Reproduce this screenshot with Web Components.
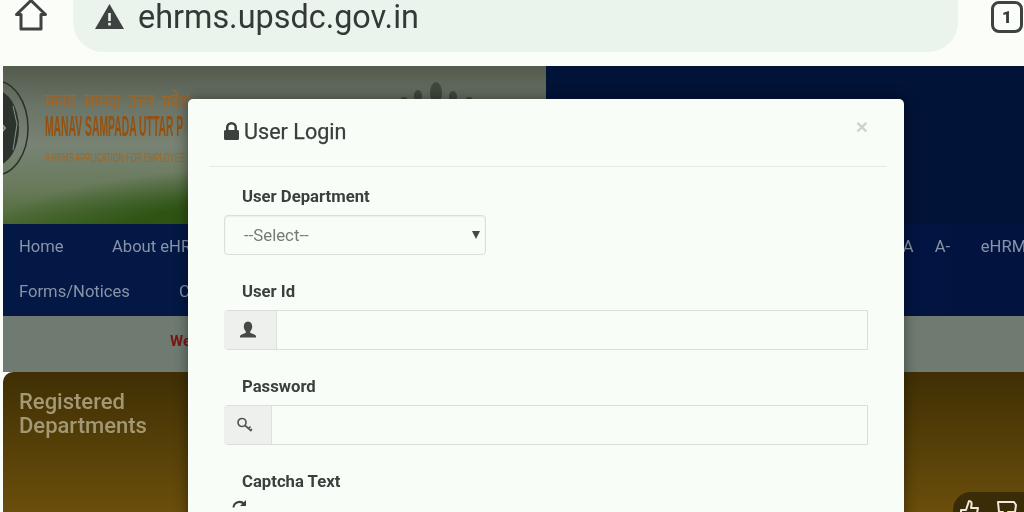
<!DOCTYPE html>
<html lang="en">
<head>
<meta charset="utf-8">
<title>User Login</title>
<style>
  html, body { margin: 0; padding: 0; height: 512px; overflow: hidden; background: #fbfdf9; font-family: Roboto, "Liberation Sans", sans-serif; }
</style>
</head>
<body>
<app-screen>
  <browser-bar url="ehrms.upsdc.gov.in" tabs="1"></browser-bar>
  <site-page></site-page>
  <login-modal heading="User Login">
    <form-field label="User Department"><select-box text="--Select--"></select-box></form-field>
    <form-field label="User Id"><input-group icon="user" addon="53"></input-group></form-field>
    <form-field label="Password"><input-group icon="key" addon="48"></input-group></form-field>
    <form-field label="Captcha Text"><refresh-icon></refresh-icon></form-field>
  </login-modal>
  <rate-pill></rate-pill>
</app-screen>

<script>
class AppScreen extends HTMLElement {
  constructor() {
    super();
    this.attachShadow({ mode: 'open' }).innerHTML = `
    <style>
      :host { display: block; position: relative; width: 1024px; height: 512px; overflow: hidden; filter: blur(.4px); }
    </style>
    <slot></slot>`;
  }
}

class BrowserBar extends HTMLElement {
  connectedCallback() {
    this.attachShadow({ mode: 'open' }).innerHTML = `
    <style>
      :host { display: flex; align-items: flex-start; height: 66px; background: #fbfdf9; box-sizing: border-box; color: #333a38; }
      .home { width: 73px; flex: none; padding: 0 0 0 14px; box-sizing: border-box; }
      .home svg { display: block; margin-top: -2px; }
      .pill { width: 885px; height: 52px; flex: none; background: #eaf3ec; border-radius: 0 0 30px 30px; display: flex; align-items: center; box-sizing: border-box; padding: 0 0 18px 22px; }
      .url { font-size: 32.400px; margin-left: 14px; line-height: 34px; color: #323a38; }
      .tabs { margin: 1px 0 0 33px; width: 32px; height: 32px; border: 3px solid #3c4341; border-radius: 8px; box-sizing: border-box; display: flex; align-items: center; justify-content: center; font: 900 17px Roboto, sans-serif; }
      .pill svg { margin-top: -1px; }
    </style>
    <div class="home">
      <svg width="34" height="34" viewBox="0 0 34 34" fill="none" stroke="#3c4341" stroke-width="3" stroke-linejoin="round"><path d="M2.500 16.500 17 2.500 31.500 16.500H27V31H7V16.500Z"/></svg>
    </div>
    <div class="pill">
      <svg width="29" height="25" viewBox="0 0 29 25"><path fill="#3c4341" d="M14.500 0 29 25H0Z"/><path fill="#eaf3ec" d="M13.200 9h2.600v8h-2.600zM13.200 18.800h2.600v2.600h-2.600z"/></svg>
      <span class="url">${this.getAttribute('url')}</span>
    </div>
    <div class="tabs">${this.getAttribute('tabs')}</div>`;
  }
}

class SitePage extends HTMLElement {
  connectedCallback() {
    this.attachShadow({ mode: 'open' }).innerHTML = `
    <style>
      :host { display: block; margin-left: 3px; height: 446px; overflow: hidden; }
      .top { display: flex; height: 158px; box-shadow: inset 0 1px 0 #444; }
      .brand { width: 543px; flex: none; position: relative; overflow: hidden;
        background:
          radial-gradient(ellipse 320px 70px at 300px 170px, #27500c 0%, rgba(39,80,12,.85) 55%, rgba(39,80,12,0) 100%),
          linear-gradient(#535b4c 0%, #6a7467 25%, #788374 50%, #687a5a 78%, #4d6a34 100%); }
      .navy { flex: 1; background: #021338; }
      .emblem { position: absolute; left: -40px; top: 14px; }
      .hands { position: absolute; left: 395px; top: 12px; }
      .brandtext { position: absolute; left: 42px; top: 23px; color: #a5641f; white-space: nowrap; }
      .brandtext div { transform-origin: 0 0; }
      .hi { font: 400 20px "Noto Sans", "Noto Sans CJK SC", "DejaVu Sans", sans-serif; word-spacing: 5px; transform: scaleX(.78); line-height: 23px; height: 23px; }
      .en { font: 700 30px "Liberation Sans", sans-serif; transform: scaleX(.345); line-height: 28px; height: 28px; color: #94500f; }
      .tag { font: 400 12px "Liberation Sans", sans-serif; transform: scaleX(.62); line-height: 14px; margin-top: 11px; }
      nav { height: 92px; background: linear-gradient(90deg, #031845 0%, #031845 30%, #021340 100%); color: #8794a8; font-size: 16.600px; display: grid; grid-template-rows: 44px 48px; padding: 0 0 0 16px; box-sizing: border-box; }
      .row { display: flex; align-items: center; white-space: nowrap; }
      .row span { display: block; }
      .row .home-link { width: 93px; }
      .row .forms { width: 160px; }
      .row.second { align-items: flex-start; padding-top: 14px; box-sizing: border-box; }
      .end { margin-left: auto; display: flex; margin-right: -12px; }
      .end span:nth-child(1) { width: 32px; }
      .end span:nth-child(2) { width: 46px; margin-right: 0; }
      .band { height: 56px; background: #6f7b70; display: flex; align-items: center; padding: 0 0 7px 167px; box-sizing: border-box; color: #7b1414; font: 700 15px Roboto, sans-serif; }
      .card { height: 140px; border-radius: 10px 0 0 0; background: linear-gradient(#3f2f04 0%, #4e3a07 35%, #6a4e0b 100%); padding: 18px 16px; box-sizing: border-box; color: #a39874; font-size: 22px; font-weight: 500; line-height: 24px; }
    </style>
    <div class="top">
      <div class="brand">
        <svg class="emblem" width="66" height="96" viewBox="0 0 66 96" fill="none"><ellipse cx="33" cy="48" rx="32" ry="47" stroke="#2b312b" stroke-width="1.500"/><ellipse cx="32" cy="48" rx="24" ry="38" fill="#2c332d"/><path d="M26 30 42 48 26 68M14 48h26" stroke="#8a9488" stroke-width="2"/><path d="M50 26 54 44 50 70" stroke="#8a9488" stroke-width="1"/></svg>
        <div class="brandtext">
          <div class="hi">मानव सम्पदा उत्तर प्रदेश</div>
          <div class="en">MANAV SAMPADA UTTAR P</div>
          <div class="tag">A HRMS APPLICATION FOR EMPLOYEE</div>
        </div>
        <svg class="hands" width="80" height="24" viewBox="0 0 80 24" fill="#3f473c"><ellipse cx="38" cy="15" rx="6" ry="11"/><ellipse cx="20" cy="18" rx="4" ry="6"/><ellipse cx="55" cy="19" rx="4" ry="6"/><ellipse cx="6" cy="21" rx="3" ry="2"/><ellipse cx="71" cy="21" rx="3" ry="2"/></svg>
      </div>
      <div class="navy"></div>
    </div>
    <nav>
      <div class="row"><span class="home-link">Home</span><span>About eHRMS</span><div class="end"><span>A</span><span>A-</span><span>eHRMS</span></div></div>
      <div class="row second"><span class="forms">Forms/Notices</span><span>Contact</span></div>
    </nav>
    <div class="band">Welcome</div>
    <div class="card">Registered<br>Departments</div>`;
  }
}

class LoginModal extends HTMLElement {
  connectedCallback() {
    this.attachShadow({ mode: 'open' }).innerHTML = `
    <style>
      :host { display: block; position: absolute; left: 188px; top: 99px; width: 716px; height: 440px; background: #f9fdf7; border-radius: 5px 5px 0 0; box-shadow: 0 0 14px rgba(0,0,0,.45); color: #373b39; }
      header { height: 63px; margin: 0 17px 0 21px; border-bottom: 1px solid #e6eae4; display: flex; align-items: center; position: relative; padding: 0 0 4px 15px; }
      h2 { margin: 0 0 0 5px; font: 400 21.600px Roboto, sans-serif; color: #3a3e3c; position: relative; top: 1px; -webkit-text-stroke: .25px #3a3e3c; }
      .close { position: absolute; right: 19px; top: 17px; font: 700 21px "Liberation Sans", sans-serif; line-height: 21px; color: #cfd2ce; }
      .body { padding: 20px 36px 0 36px; }
    </style>
    <header>
      <svg width="15" height="18" viewBox="0 0 15 18"><path fill="#3c403e" d="M2 8V5.500a5.500 5.500 0 0 1 11 0V8h.5A1.500 1.500 0 0 1 15 9.500v7a1.500 1.500 0 0 1-1.500 1.500h-12A1.500 1.500 0 0 1 0 16.500v-7A1.500 1.500 0 0 1 1.500 8zm2.500 0h6V5.500a3 3 0 0 0-6 0z"/></svg>
      <h2>${this.getAttribute('heading')}</h2>
      <span class="close">×</span>
    </header>
    <div class="body"><slot></slot></div>`;
  }
}

class FormField extends HTMLElement {
  connectedCallback() {
    this.attachShadow({ mode: 'open' }).innerHTML = `
    <style>
      :host { display: block; margin-bottom: 27px; }
      label { display: block; margin-left: 18px; font: 700 16.700px/20px Roboto, sans-serif; color: #3b3f3d; margin-bottom: 8px; }
    </style>
    <label>${this.getAttribute('label')}</label>
    <slot></slot>`;
  }
}

class SelectBox extends HTMLElement {
  connectedCallback() {
    this.attachShadow({ mode: 'open' }).innerHTML = `
    <style>
      :host { display: flex; align-items: center; justify-content: space-between; width: 262px; height: 40px; box-sizing: border-box; border: 1.500px solid #dbdfd9; border-radius: 4px; padding: 0 5px 0 19px; font: 400 16.800px Roboto, sans-serif; color: #777b78; box-shadow: inset 0 1px 2px rgba(0,0,0,.06); }
      i { width: 0; height: 0; border: 4px solid transparent; border-top: 8px solid #454946; border-bottom: 0; }
    </style>
    <span>${this.getAttribute('text')}</span><i></i>`;
  }
}

class InputGroup extends HTMLElement {
  connectedCallback() {
    const icons = {
      user: '<path fill="#454a47" d="M9 .500c2.800 0 4.200 2.200 4.200 5 0 1.900-.8 3.800-1.900 4.700v1.700c2 .8 5.200 1.500 5.700 3.100v1.500H1v-1.500c.5-1.600 3.700-2.300 5.700-3.100v-1.700C5.600 9.300 4.800 7.400 4.800 5.500 4.800 2.700 6.200.5 9 .5z"/>',
      key: '<g fill="none" stroke="#545956" stroke-width="1.700"><circle cx="6" cy="6.500" r="4"/><path d="M9 9.500 15.500 15M12.500 12.500l2-2M14.500 14.500l1.500-1.500"/></g>'
    };
    this.attachShadow({ mode: 'open' }).innerHTML = `
    <style>
      :host { display: flex; height: 40px; width: 644px; box-sizing: border-box; border: 1.500px solid #dbdfd9; border-radius: 4px 0 0 4px; }
      .addon { width: ${this.getAttribute('addon')}px; flex: none; box-sizing: border-box; margin-left: -1px; padding-right: 5px; background: #edf0ec; border-right: 1.500px solid #dde1db; border-radius: 4px 0 0 4px; display: flex; align-items: center; justify-content: center; }
      .input { flex: 1; }
    </style>
    <div class="addon"><svg width="18" height="18" viewBox="0 0 18 18">${icons[this.getAttribute('icon')]}</svg></div>
    <div class="input"></div>`;
  }
}

class RefreshIcon extends HTMLElement {
  connectedCallback() {
    this.attachShadow({ mode: 'open' }).innerHTML = `
    <style>
      :host { display: block; margin: 1px 0 0 8px; height: 16px; }
    </style>
    <svg width="15" height="15" viewBox="0 0 15 15" fill="none" stroke="#3b3f3d" stroke-width="2"><path d="M1.500 7.500a6 6 0 0 1 10.500-3.500"/><path fill="#3b3f3d" stroke="none" d="M14 0v6H8z"/></svg>`;
  }
}

class RatePill extends HTMLElement {
  connectedCallback() {
    this.attachShadow({ mode: 'open' }).innerHTML = `
    <style>
      :host { display: flex; gap: 15px; position: absolute; left: 953px; top: 492px; width: 90px; height: 40px; padding: 7px 0 0 6px; box-sizing: border-box; background: #3a2c06; border-radius: 18px 0 0 0; }
    </style>
    <svg width="22" height="22" viewBox="0 0 22 22" fill="none" stroke="#eee9d8" stroke-width="2" stroke-linejoin="round"><path d="M2 11h5l3-9c2 0 3 1.500 2.500 4L12 9h7l-2 10H2z"/></svg>
    <svg width="22" height="22" viewBox="0 0 22 22" fill="none" stroke="#eee9d8" stroke-width="2" stroke-linejoin="round"><path d="M2 3h16l2 3-1 7h-7l1 5c0 2-1 3-3 3l-3-8H3z"/></svg>`;
  }
}

customElements.define('app-screen', AppScreen);
customElements.define('browser-bar', BrowserBar);
customElements.define('site-page', SitePage);
customElements.define('login-modal', LoginModal);
customElements.define('form-field', FormField);
customElements.define('select-box', SelectBox);
customElements.define('input-group', InputGroup);
customElements.define('refresh-icon', RefreshIcon);
customElements.define('rate-pill', RatePill);
</script>
</body>
</html>
